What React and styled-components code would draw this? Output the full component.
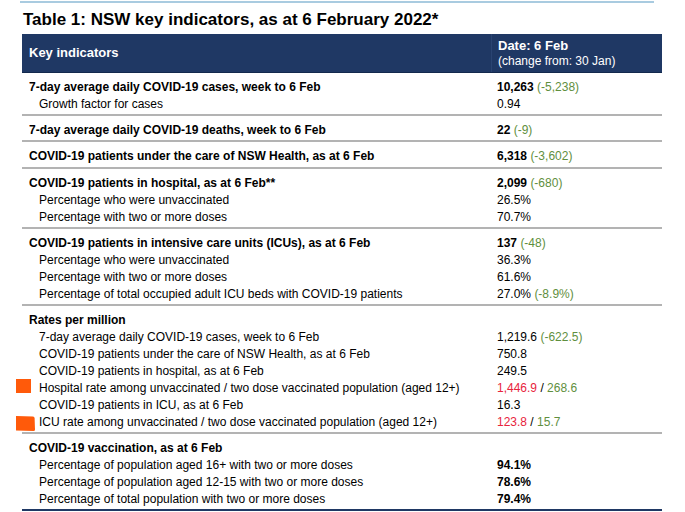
import React from "react";
import styled, { createGlobalStyle } from "styled-components";

const Global = createGlobalStyle`
  html, body { margin: 0; padding: 0; background: #ffffff; }
  body { font-family: "Liberation Sans", Arial, sans-serif; color: #000; }
`;

const Page = styled.div`
  width: 685px;
  height: 512px;
  overflow: hidden;
  box-sizing: border-box;
  padding-top: 1px;
`;

const TopRule = styled.div`
  margin-left: 20px;
  width: 634px;
  height: 2px;
  background: #a9cbe0;
`;

const Title = styled.h1`
  margin: 7px 0 0 23px;
  font-size: 17px;
  line-height: 20px;
  font-weight: bold;
  color: #000;
`;

const Table = styled.div`
  margin: 4px 0 0 22px;
  width: 640px;
`;

const Header = styled.div`
  display: grid;
  grid-template-columns: 469px 171px;
  background: #1f3864;
  color: #fff;
  height: 39px;
  box-sizing: border-box;
  border-bottom: 1px solid #13294d;
`;

const HeaderLabel = styled.div`
  align-self: center;
  padding-left: 7px;
  font-size: 13px;
  font-weight: bold;
  margin-top: -1px;
`;

const HeaderDate = styled.div`
  padding: 4px 0 0 6px;
  border-left: 1px solid #2a4472;
  display: flex;
  flex-direction: column;
`;

const DateTitle = styled.span`
  font-size: 13px;
  font-weight: bold;
  line-height: 15.5px;
`;

const DateSub = styled.span`
  font-size: 12px;
  line-height: 15.5px;
`;

const Group = styled.div`
  padding: 6px 0 1.2px;
  border-bottom: 2px solid ${(p) => (p.$last ? "#1f3864" : "#b3b3b3")};
`;

const Row = styled.div`
  position: relative;
  display: grid;
  grid-template-columns: 469px 171px;
  height: 17px;
  line-height: 17px;
  font-size: 12px;
  white-space: nowrap;
`;

const Label = styled.div`
  padding-left: ${(p) => (p.$indent ? 17 : 7)}px;
  font-weight: ${(p) => (p.$bold ? "bold" : "normal")};
`;

const Value = styled.div`
  padding-left: 6px;
`;

const Seg = styled.span`
  color: ${(p) =>
    p.$tone === "green" ? "#5f8f3e" : p.$tone === "red" ? "#e8243d" : "#000"};
  font-weight: ${(p) => (p.$bold ? "bold" : "normal")};
`;

const MarkerWrap = styled.span`
  position: absolute;
  left: ${(p) => p.$left}px;
  top: ${(p) => p.$top}px;
  line-height: 0;
`;

const SquareMarker = () => (
  <MarkerWrap $left={-6} $top={-1}>
    <svg width="15" height="14" viewBox="0 0 15 14">
      <rect x="0" y="0" width="15" height="14" fill="#ff5a0a" />
    </svg>
  </MarkerWrap>
);

const BrushMarker = () => (
  <MarkerWrap $left={-6} $top={1.5}>
    <svg width="20" height="17" viewBox="0 0 20 17">
      <path d="M0 1 L17 1.5 Q18.5 1.6 18.6 3 L19 14.5 Q19 16 17.5 16 L0 15.5 Z" fill="#ff5a0a" />
    </svg>
  </MarkerWrap>
);

const g = (t) => ({ t, tone: "green" });
const b = (t) => ({ t, bold: true });
const r = (t) => ({ t, tone: "red" });
const p = (t) => ({ t });

const groups = [
  [
    { label: "7-day average daily COVID-19 cases, week to 6 Feb", bold: true, value: [b("10,263"), p(" "), g("(-5,238)")] },
    { label: "Growth factor for cases", indent: true, value: [p("0.94")] },
  ],
  [
    { label: "7-day average daily COVID-19 deaths, week to 6 Feb", bold: true, value: [b("22"), p(" "), g("(-9)")] },
  ],
  [
    { label: "COVID-19 patients under the care of NSW Health, as at 6 Feb", bold: true, value: [b("6,318"), p(" "), g("(-3,602)")] },
  ],
  [
    { label: "COVID-19 patients in hospital, as at 6 Feb**", bold: true, value: [b("2,099"), p(" "), g("(-680)")] },
    { label: "Percentage who were unvaccinated", indent: true, value: [p("26.5%")] },
    { label: "Percentage with two or more doses", indent: true, value: [p("70.7%")] },
  ],
  [
    { label: "COVID-19 patients in intensive care units (ICUs), as at 6 Feb", bold: true, value: [b("137"), p(" "), g("(-48)")] },
    { label: "Percentage who were unvaccinated", indent: true, value: [p("36.3%")] },
    { label: "Percentage with two or more doses", indent: true, value: [p("61.6%")] },
    { label: "Percentage of total occupied adult ICU beds with COVID-19 patients", indent: true, value: [p("27.0%"), p(" "), g("(-8.9%)")] },
  ],
  [
    { label: "Rates per million", bold: true, value: [] },
    { label: "7-day average daily COVID-19 cases, week to 6 Feb", indent: true, value: [p("1,219.6"), p(" "), g("(-622.5)")] },
    { label: "COVID-19 patients under the care of NSW Health, as at 6 Feb", indent: true, value: [p("750.8")] },
    { label: "COVID-19 patients in hospital, as at 6 Feb", indent: true, value: [p("249.5")] },
    { label: "Hospital rate among unvaccinated / two dose vaccinated population (aged 12+)", indent: true, marker: "square", value: [r("1,446.9"), p(" / "), g("268.6")] },
    { label: "COVID-19 patients in ICU, as at 6 Feb", indent: true, value: [p("16.3")] },
    { label: "ICU rate among unvaccinated / two dose vaccinated population (aged 12+)", indent: true, marker: "brush", value: [r("123.8"), p(" / "), g("15.7")] },
  ],
  [
    { label: "COVID-19 vaccination, as at 6 Feb", bold: true, value: [] },
    { label: "Percentage of population aged 16+ with two or more doses", indent: true, value: [b("94.1%")] },
    { label: "Percentage of population aged 12-15 with two or more doses", indent: true, value: [b("78.6%")] },
    { label: "Percentage of total population with two or more doses", indent: true, value: [b("79.4%")] },
  ],
];

export default function App() {
  return (
    <Page>
      <Global />
      <TopRule />
      <Title>Table 1: NSW key indicators, as at 6 February 2022*</Title>
      <Table>
        <Header>
          <HeaderLabel>Key indicators</HeaderLabel>
          <HeaderDate>
            <DateTitle>Date: 6 Feb</DateTitle>
            <DateSub>(change from: 30 Jan)</DateSub>
          </HeaderDate>
        </Header>
        {groups.map((rows, gi) => (
          <Group key={gi} $last={gi === groups.length - 1}>
            {rows.map((row, ri) => (
              <Row key={ri}>
                {row.marker === "square" && <SquareMarker />}
                {row.marker === "brush" && <BrushMarker />}
                <Label $bold={row.bold} $indent={row.indent}>
                  {row.label}
                </Label>
                <Value>
                  {row.value.map((s, si) => (
                    <Seg key={si} $tone={s.tone} $bold={s.bold}>
                      {s.t}
                    </Seg>
                  ))}
                </Value>
              </Row>
            ))}
          </Group>
        ))}
      </Table>
    </Page>
  );
}
